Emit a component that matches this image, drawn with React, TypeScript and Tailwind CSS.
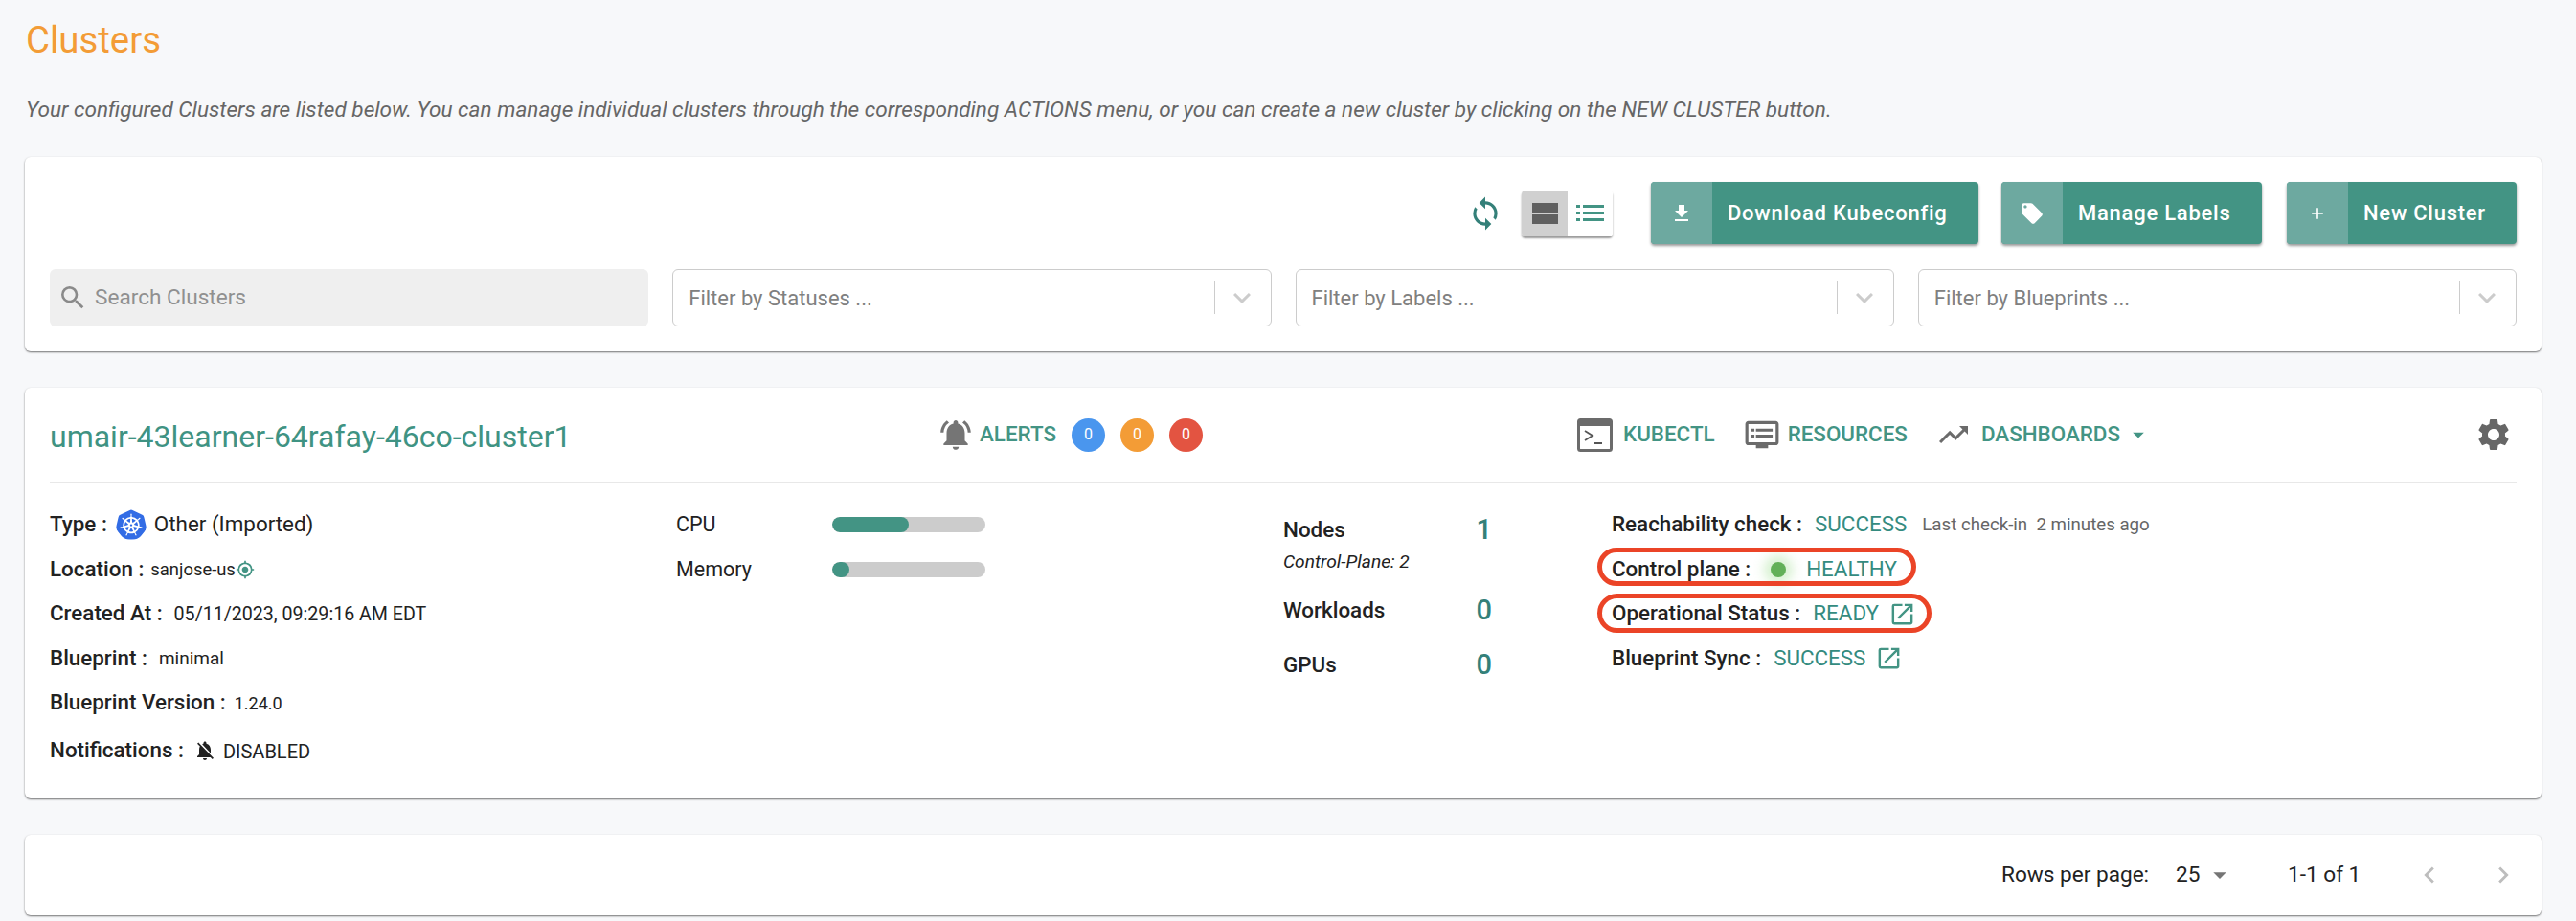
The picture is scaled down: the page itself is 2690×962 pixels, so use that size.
import React from "react";
import {
  MdFileDownload, MdLocalOffer, MdAdd, MdSync, MdSearch, MdKeyboardArrowDown,
  MdNotificationsActive, MdNotificationsOff, MdDvr, MdTrendingUp, MdArrowDropDown, MdSettings, MdOpenInNew,
  MdMyLocation, MdChevronLeft, MdChevronRight,
} from "react-icons/md";
import { SiKubernetes } from "react-icons/si";

const card = "bg-white rounded-md shadow-[0_1px_2px_rgba(0,0,0,0.55)]";

function ActionButton({ icon, label, width }: { icon: React.ReactNode; label: string; width: string }) {
  return (
    <div className={`flex h-[65px] ${width} rounded overflow-hidden bg-[#439484] text-white shadow-[0_2px_3px_rgba(0,0,0,0.4)]`}>
      <div className="w-[64px] bg-[#6da9a0] flex items-center justify-center shrink-0">{icon}</div>
      <div className="flex-1 flex items-center pl-[16px] text-[22px] font-medium tracking-[0.75px] whitespace-nowrap">{label}</div>
    </div>
  );
}

function Filter({ label }: { label: string }) {
  return (
    <div className="h-[60px] rounded-md border border-[#cccccc] flex items-center pl-[16px] pr-[12px] text-[22px] text-[#808080]">
      <span className="flex-1">{label}</span>
      <span className="w-px h-[34px] bg-[#cccccc]" />
      <MdKeyboardArrowDown className="text-[#cccccc] w-[36px] h-[36px] ml-[10px]" />
    </div>
  );
}

function Detail({ label, children, h = "h-[46.5px]" }: { label: string; children: React.ReactNode; h?: string }) {
  return (
    <div className={`flex items-center ${h} text-[#222] whitespace-nowrap`}>
      <span className="text-[22.4px] font-medium mr-[9px]">{label} :</span>
      {children}
    </div>
  );
}

function Usage({ label, pct }: { label: string; pct: number }) {
  return (
    <div className="flex items-center h-[46.5px]">
      <span className="w-[163px] text-[21.5px] text-[#222]">{label}</span>
      <div className="w-[160px] h-[16px] rounded-full bg-[#cccccc] overflow-hidden">
        <div className="h-full rounded-full bg-[#439484]" style={{ width: `${pct}%` }} />
      </div>
    </div>
  );
}

function Stat({ label, value, sub, h }: { label: string; value: string; sub?: string; h: string }) {
  return (
    <div className={h}>
      <div className="flex items-center justify-between w-[218px] h-[36px]">
        <span className="text-[22.4px] font-medium text-[#222]">{label}</span>
        <span className="text-[29px] font-medium text-[#348079]">{value}</span>
      </div>
      {sub && <div className="text-[19.2px] italic text-[#222] mt-[1px]">{sub}</div>}
    </div>
  );
}

function Terminal() {
  return (
    <svg viewBox="0 0 37 35" className="w-[37px] h-[35px] shrink-0">
      <rect x="1.5" y="1.5" width="34" height="32" rx="2" fill="#fff" stroke="#6b6b6b" strokeWidth="3" />
      <rect x="1" y="1" width="35" height="7" rx="2" fill="#6b6b6b" />
      <path d="M8 13l8 5-8 5" fill="none" stroke="#555" strokeWidth="1.8" />
      <path d="M18 26h8" stroke="#555" strokeWidth="2" />
    </svg>
  );
}

function StreamIcon() {
  return (
    <svg viewBox="0 0 27 22" className="w-[27px] h-[22px]">
      <rect x="0" y="0" width="27" height="10" fill="#606060" />
      <rect x="0" y="12" width="27" height="10" fill="#606060" />
    </svg>
  );
}

function ListIcon() {
  return (
    <svg viewBox="0 0 29 17" className="w-[29px] h-[17px]">
      <g fill="#439484">
        <rect x="0" y="0" width="4" height="3" />
        <rect x="7" y="0" width="22" height="3" />
        <rect x="0" y="7" width="4" height="3" />
        <rect x="7" y="7" width="22" height="3" />
        <rect x="0" y="14" width="4" height="3" />
        <rect x="7" y="14" width="22" height="3" />
      </g>
    </svg>
  );
}

function Status({ children }: { children: React.ReactNode }) {
  return <span className="text-[22.4px] text-[#348b7f]">{children}</span>;
}

export default function App() {
  return (
    <div className="min-h-[962px] h-[962px] overflow-hidden bg-[#f7f8fa] pl-[26px] pr-[36px] font-['Roboto',sans-serif]">
      <div className="h-[84px] flex items-center pl-px text-[38.4px] text-[#f39c36]">Clusters</div>
      <div className="h-[61px] pt-[14px] pl-px text-[22.6px] italic text-[#666666] whitespace-nowrap">
        Your configured Clusters are listed below. You can manage individual clusters through the corresponding ACTIONS menu, or you can create a new cluster by clicking on the NEW CLUSTER button.
      </div>

      <div className="relative h-[203px] mt-[19px] px-[26px] pt-[26px] bg-white rounded-md shadow-[0_1px_2px_rgba(0,0,0,0.55)]">
        <div className="flex items-center justify-end h-[65px]">
          <MdSync className="w-[38px] h-[38px] text-[#348079] mr-[19px]" />
          <div className="flex h-[48px] w-[95px] rounded overflow-hidden shadow-[0_2px_2px_rgba(0,0,0,0.4)] mr-[40px]">
            <div className="w-[48px] bg-[#d0d0d0] flex items-center justify-center"><StreamIcon /></div>
            <div className="flex-1 bg-white flex items-center justify-center"><ListIcon /></div>
          </div>
          <ActionButton width="w-[342px]" icon={<MdFileDownload className="w-[24px] h-[24px]" />} label="Download Kubeconfig" />
          <div className="w-[24px]" />
          <ActionButton width="w-[272px]" icon={<MdLocalOffer className="w-[26px] h-[26px]" />} label="Manage Labels" />
          <div className="w-[26px]" />
          <ActionButton width="w-[240px]" icon={<MdAdd className="w-[20px] h-[20px]" />} label="New Cluster" />
        </div>
        <div className="grid grid-cols-4 gap-[25px] mt-[26px]">
          <div className="h-[60px] rounded-md bg-[#efefef] flex items-center pl-[8px] text-[22.6px] text-[#909090]">
            <MdSearch className="w-[32px] h-[32px] text-[#8a8a8a] mr-[7px]" />
            Search Clusters
          </div>
          <Filter label="Filter by Statuses ..." />
          <Filter label="Filter by Labels ..." />
          <Filter label="Filter by Blueprints ..." />
        </div>
      </div>

      <div className={`relative h-[429px] mt-[38px] px-[26px] ${card}`}>
        <div className="flex items-center h-[100px] border-b-2 border-[#e8e8e8]">
          <div className="w-[929px] pt-[3px] text-[32px] text-[#3f9383] whitespace-nowrap">umair-43learner-64rafay-46co-cluster1</div>
          <MdNotificationsActive className="w-[38px] h-[38px] text-[#757575] -ml-[2px] mr-[6px]" />
          <span className="text-[22.4px] font-medium text-[#439484] w-[96px]">ALERTS</span>
          <div className="flex gap-[16px]">
            <span className="w-[35px] h-[35px] rounded-full bg-[#4a96ee] text-white text-[16px] flex items-center justify-center">0</span>
            <span className="w-[35px] h-[35px] rounded-full bg-[#f39c36] text-white text-[16px] flex items-center justify-center">0</span>
            <span className="w-[35px] h-[35px] rounded-full bg-[#e35441] text-white text-[16px] flex items-center justify-center">0</span>
          </div>
          <div className="w-[391px]" />
          <Terminal />
          <span className="ml-[11px] text-[22.4px] font-medium text-[#439484]">KUBECTL</span>
          <MdDvr className="ml-[30px] w-[38px] h-[38px] text-[#6b6b6b]" />
          <span className="ml-[8px] text-[22.4px] font-medium text-[#439484]">RESOURCES</span>
          <MdTrendingUp className="ml-[30px] w-[36px] h-[36px] text-[#6b6b6b]" />
          <span className="ml-[11px] text-[22.4px] font-medium text-[#439484]">DASHBOARDS</span>
          <MdArrowDropDown className="ml-[5px] w-[28px] h-[28px] text-[#439484]" />
          <MdSettings className="ml-auto mr-[4px] w-[40px] h-[40px] text-[#666666]" />
        </div>

        <div className="flex pt-[20px]">
          <div className="w-[654px]">
            <Detail label="Type">
              <SiKubernetes className="w-[32px] h-[32px] text-[#326ce5] bg-white rounded-full mr-[8px]" />
              <span className="text-[22.4px] text-[#222]">Other (Imported)</span>
            </Detail>
            <Detail label="Location">
              <span className="text-[18.4px] -ml-[2px] text-[#222]">sanjose-us</span>
              <MdMyLocation className="w-[20px] h-[20px] text-[#439484]" />
            </Detail>
            <Detail label="Created At">
              <span className="text-[19.6px] ml-[3px] text-[#222]">05/11/2023, 09:29:16 AM EDT</span>
            </Detail>
            <Detail label="Blueprint">
              <span className="text-[19px] ml-[3px] text-[#222]">minimal</span>
            </Detail>
            <Detail label="Blueprint Version">
              <span className="text-[18px] text-[#222]">1.24.0</span>
            </Detail>
            <Detail label="Notifications" h="h-[53px]">
              <MdNotificationsOff className="w-[24px] h-[24px] text-[#222] ml-[1px] mr-[7px]" />
              <span className="text-[20px] text-[#222] mt-[2px]">DISABLED</span>
            </Detail>
          </div>
          <div className="w-[634px]">
            <Usage label="CPU" pct={50} />
            <Usage label="Memory" pct={11} />
          </div>
          <div className="w-[343px] pt-[11px]">
            <Stat label="Nodes" value="1" sub="Control-Plane: 2" h="h-[84px]" />
            <Stat label="Workloads" value="0" h="h-[57px]" />
            <Stat label="GPUs" value="0" h="h-[36px]" />
          </div>
          <div className="flex-1">
            <Detail label="Reachability check">
              <span className="ml-[4px]"><Status>SUCCESS</Status></span>
              <span className="ml-[16px] text-[18.7px] text-[#666666]">Last check-in&nbsp;&nbsp;2 minutes ago</span>
            </Detail>
            <Detail label="Control plane">
              <span className="relative ml-[12px] mr-[21px] w-[16px] h-[16px] rounded-full bg-[#62b058] shadow-[0_0_12px_7px_rgba(120,210,100,0.3)]" />
              <Status>HEALTHY</Status>
              <span className="absolute left-[1642px] top-[167px] w-[333px] h-[40px] rounded-full border-[5px] border-[#eb4427]" />
            </Detail>
            <Detail label="Operational Status">
              <span className="ml-[4px]"><Status>READY</Status></span>
              <MdOpenInNew className="ml-[10px] w-[29px] h-[29px] text-[#439484]" />
              <span className="absolute left-[1642px] top-[215px] w-[349px] h-[41px] rounded-full border-[5px] border-[#eb4427]" />
            </Detail>
            <Detail label="Blueprint Sync">
              <span className="ml-[4px]"><Status>SUCCESS</Status></span>
              <MdOpenInNew className="ml-[10px] w-[29px] h-[29px] text-[#439484]" />
            </Detail>
          </div>
        </div>
      </div>

      <div className={`flex items-center h-[84px] mt-[38px] pl-[2064px] text-[22.6px] text-[#222] whitespace-nowrap ${card}`}>
        <span className="w-[182px]">Rows per page:</span>
        <span className="w-[38px]">25</span>
        <MdArrowDropDown className="w-[32px] h-[32px] text-[#757575] -ml-[8px]" />
        <span className="ml-[55px] w-[74px]">1-1 of 1</span>
        <MdChevronLeft className="ml-[57px] w-[34px] h-[34px] text-[#bdbdbd]" />
        <MdChevronRight className="ml-[43px] w-[34px] h-[34px] text-[#bdbdbd]" />
      </div>
    </div>
  );
}
